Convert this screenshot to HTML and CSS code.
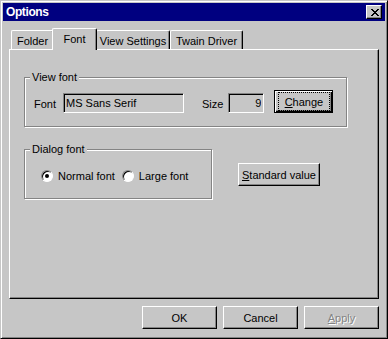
FILE: index.html
```html
<!DOCTYPE html>
<html lang="en">
<head>
    <meta charset="UTF-8">
    <meta name="viewport" content="width=device-width, initial-scale=1.0">
    <title>Options</title>
    <link rel="stylesheet" href="styles.css">
</head>
<body>
    <div class="window">
        <div class="titlebar">
            <span class="title">Options</span>
            <button type="button" class="close-btn">
                <svg width="8" height="7" viewBox="0 0 8 7" shape-rendering="crispEdges">
                    <path fill="#000" d="M0 0h2v1H0zM6 0h2v1H6zM1 1h2v1H1zM5 1h2v1H5zM2 2h4v1H2zM3 3h2v1H3zM2 4h4v1H2zM1 5h2v1H1zM5 5h2v1H5zM0 6h2v1H0zM6 6h2v1H6z"/>
                </svg>
            </button>
        </div>

        <div class="tabs">
            <div class="tab tab-folder">Folder</div>
            <div class="tab tab-font active">Font</div>
            <div class="tab tab-view">View Settings</div>
            <div class="tab tab-twain">Twain Driver</div>
        </div>

        <div class="panel">
            <div class="group group-view">
                <span class="group-title">View font</span>
                <div class="font-row">
                    <label class="field-label" for="fontName">Font</label>
                    <input type="text" id="fontName" class="field field-name" value="MS Sans Serif" readonly>
                    <label class="field-label size-label" for="fontSize">Size</label>
                    <input type="text" id="fontSize" class="field field-size" value="9" readonly>
                    <button type="button" class="btn btn-default btn-change"><u>C</u>hange</button>
                </div>
            </div>

            <div class="dialog-row">
                <div class="group group-dialog">
                    <span class="group-title">Dialog font</span>
                    <div class="radio-row">
                        <label class="radio"><span class="radio-dot checked"></span>Normal font</label>
                        <label class="radio"><span class="radio-dot"></span>Large font</label>
                    </div>
                </div>
                <button type="button" class="btn btn-standard"><u>S</u>tandard value</button>
            </div>
        </div>

        <div class="actions">
            <button type="button" class="btn">OK</button>
            <button type="button" class="btn">Cancel</button>
            <button type="button" class="btn" disabled><u>A</u>pply</button>
        </div>
    </div>
</body>
</html>
```

FILE: styles.css
```css
body {
    margin: 0;
    background-color: #c6c6c6;
    font-family: "Liberation Sans", Arial, sans-serif;
    font-size: 11px;
    color: #000;
}

.window {
    width: 388px;
    height: 339px;
    box-sizing: border-box;
    padding: 2px;
    background-color: #c6c6c6;
    border: 1px solid;
    border-color: #c6c6c6 #000 #000 #c6c6c6;
    box-shadow: inset 1px 1px #fff, inset -1px -1px #848484;
}

/* title bar */
.titlebar {
    height: 18px;
    display: flex;
    align-items: center;
    justify-content: space-between;
    padding: 0 3px;
    background-color: #000080;
}

.title {
    color: #fff;
    font-weight: bold;
    font-size: 12px;
    letter-spacing: -0.4px;
    line-height: 18px;
}

.close-btn {
    align-self: flex-start;
    margin-top: 2px;
    width: 16px;
    height: 14px;
    box-sizing: border-box;
    padding: 0;
    display: flex;
    align-items: center;
    justify-content: center;
    background-color: #c6c6c6;
    border: 1px solid;
    border-color: #fff #000 #000 #fff;
    box-shadow: inset -1px -1px #848484;
}

.close-btn svg {
    display: block;
    margin: 1px 0 0 1px;
}

/* tabs */
.tabs {
    display: flex;
    align-items: flex-end;
    margin: 7px 6px 0;
    padding-left: 2px;
}

.tab {
    box-sizing: border-box;
    height: 19px;
    padding-top: 4px;
    line-height: 13px;
    text-align: center;
    white-space: nowrap;
    background-color: #c6c6c6;
    border: 1px solid #fff;
    border-right-color: #000;
    border-bottom: none;
    border-radius: 2px 2px 0 0;
    box-shadow: inset -1px 0 #848484;
}

.tab.active {
    position: relative;
    z-index: 1;
    height: 22px;
    margin: 0 -1px -1px -2px;
}

.tab-folder { width: 43px; }
.tab-font { width: 45px; }
.tab-view { width: 74px; }
.tab-twain { width: 73px; }

.panel {
    height: 250px;
    box-sizing: border-box;
    margin: 0 6px;
    padding: 27px 0 0 14px;
    border: 1px solid;
    border-color: #fff #000 #000 #fff;
    box-shadow: inset -1px -1px #848484;
}

/* group boxes */
.group {
    position: relative;
    box-sizing: border-box;
    height: 50px;
    border: 1px solid #848484;
    box-shadow: inset 1px 1px #fff, 1px 1px #fff;
}

.group-title {
    position: absolute;
    top: -7px;
    left: 5px;
    padding: 0 2px;
    line-height: 13px;
    background-color: #c6c6c6;
}

.group-view {
    width: 323px;
    padding: 12px 0 0 9px;
}

.font-row {
    display: flex;
    align-items: flex-end;
    height: 23px;
}

.field-label {
    line-height: 13px;
    margin-bottom: 2px;
}

.field {
    box-sizing: border-box;
    height: 20px;
    margin: 0;
    padding: 0 2px;
    font: inherit;
    color: #000;
    background-color: #c6c6c6;
    border: 1px solid;
    border-color: #848484 #fff #fff #848484;
    box-shadow: inset 1px 1px #000;
    outline: none;
}

.field-name {
    width: 121px;
    margin-left: 7px;
}

.size-label {
    margin-left: 18px;
}

.field-size {
    width: 36px;
    margin-left: 5px;
    text-align: right;
}

/* buttons */
.btn {
    width: 75px;
    height: 23px;
    box-sizing: border-box;
    padding: 0;
    font: inherit;
    color: #000;
    background-color: #c6c6c6;
    border: 1px solid;
    border-color: #fff #000 #000 #fff;
    box-shadow: inset -1px -1px #848484;
}

.btn:disabled {
    color: #848484;
    text-shadow: 1px 1px #fff;
}

.btn-default {
    position: relative;
    border-color: #000;
    box-shadow: inset 1px 1px #fff, inset -1px -1px #000, inset -2px -2px #848484;
}

.btn-change {
    width: 59px;
    margin-left: 10px;
}

.btn-change::after {
    content: "";
    position: absolute;
    top: 1px;
    right: 2px;
    bottom: 1px;
    left: 3px;
    border: 1px dotted #000;
}

.dialog-row {
    display: flex;
    align-items: flex-start;
    margin-top: 22px;
}

.group-dialog {
    width: 188px;
    padding: 20px 0 0 16px;
}

.radio-row {
    display: flex;
    align-items: center;
    height: 12px;
}

.radio {
    display: flex;
    align-items: center;
    line-height: 13px;
    margin-right: 7px;
}

.radio-dot {
    position: relative;
    width: 12px;
    height: 12px;
    box-sizing: border-box;
    margin-right: 5px;
    border-radius: 50%;
    background-color: #fff;
    border: 1px solid;
    border-color: #848484 #fff #fff #848484;
    box-shadow: inset 1px 1px #000;
}

.radio-dot.checked::after {
    content: "";
    position: absolute;
    top: 3px;
    left: 3px;
    width: 4px;
    height: 4px;
    border-radius: 50%;
    background-color: #000;
}

.btn-standard {
    width: 82px;
    margin: 14px 0 0 26px;
}

.actions {
    display: flex;
    justify-content: flex-end;
    gap: 6px;
    margin: 7px 6px 0;
}
```
